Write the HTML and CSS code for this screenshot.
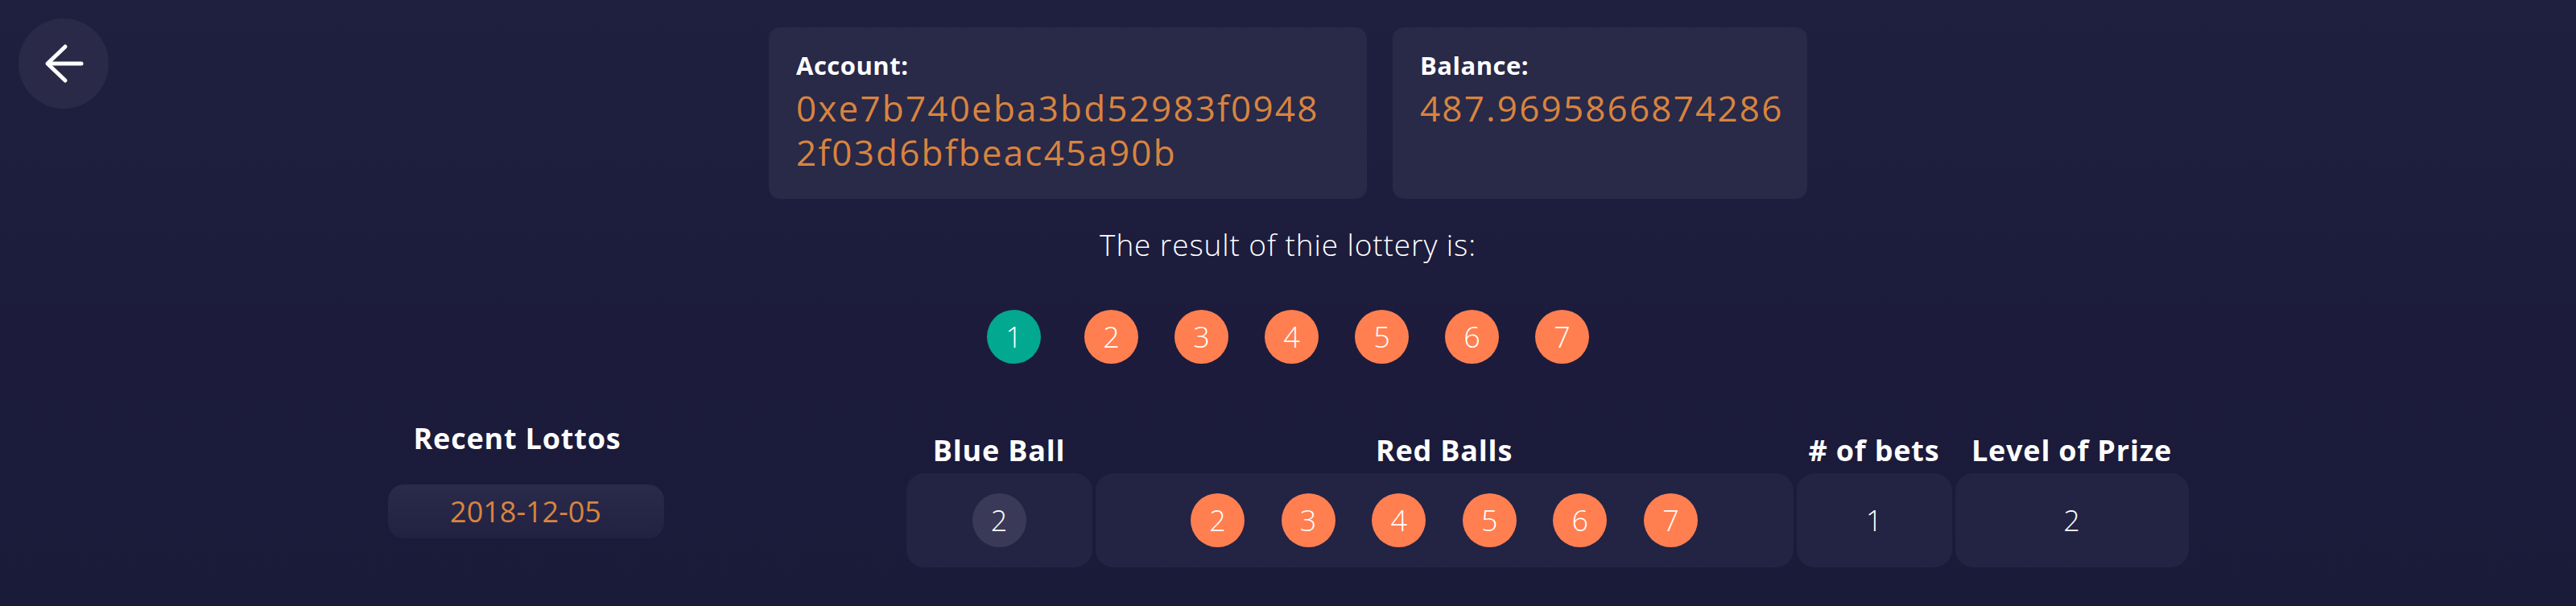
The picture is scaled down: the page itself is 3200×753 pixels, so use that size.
FILE: index.html
```html
<!DOCTYPE html>
<html lang="en">
<head>
<meta charset="utf-8">
<title>Lottery</title>
<link rel="stylesheet" href="styles.css">
</head>
<body>
<a class="back-btn" href="#" aria-label="Back">
  <svg width="112" height="112" viewBox="0 0 112 112" fill="none" stroke="#ffffff" stroke-width="5" stroke-linecap="round" stroke-linejoin="round">
    <path d="M37 56 H78"/>
    <path d="M58 35 L36 56 L58 77"/>
  </svg>
</a>

<header class="info">
  <div class="info-card account">
    <div class="info-label">Account:</div>
    <div class="info-value">0xe7b740eba3bd52983f0948<br>2f03d6bfbeac45a90b</div>
  </div>
  <div class="info-card balance">
    <div class="info-label">Balance:</div>
    <div class="info-value">487.9695866874286</div>
  </div>
</header>

<section class="result">
  <p class="result-title">The result of thie lottery is:</p>
  <div class="result-balls">
    <span class="ball ball-green ball-first">1</span>
    <span class="ball ball-red">2</span>
    <span class="ball ball-red">3</span>
    <span class="ball ball-red">4</span>
    <span class="ball ball-red">5</span>
    <span class="ball ball-red">6</span>
    <span class="ball ball-red">7</span>
  </div>
</section>

<section class="history">
  <div class="recent">
    <h2 class="recent-title">Recent Lottos</h2>
    <div class="date-pill">2018-12-05</div>
  </div>
  <div class="bets">
    <div class="col-head">Blue Ball</div>
    <div class="col-head">Red Balls</div>
    <div class="col-head"># of bets</div>
    <div class="col-head">Level of Prize</div>
    <div class="cell"><span class="ball ball-blue">2</span></div>
    <div class="cell cell-red">
      <span class="ball ball-red">2</span>
      <span class="ball ball-red">3</span>
      <span class="ball ball-red">4</span>
      <span class="ball ball-red">5</span>
      <span class="ball ball-red">6</span>
      <span class="ball ball-red">7</span>
    </div>
    <div class="cell cell-text">1</div>
    <div class="cell cell-text">2</div>
  </div>
</section>
</body>
</html>
```
FILE: styles.css
```css
* { box-sizing: border-box; }

html, body { height: 100%; }

body {
  margin: 0;
  padding-top: 34px;
  min-height: 753px;
  background: linear-gradient(180deg, #1f1f3f 0%, #1c1b3b 60%, #1a1a39 100%);
  font-family: "Open Sans", "Noto Sans", sans-serif;
  color: #ffffff;
}

.back-btn {
  position: absolute;
  left: 23px;
  top: 23px;
  width: 112px;
  height: 112px;
  border-radius: 50%;
  background: #2a2a48;
  display: block;
}
.back-btn svg { display: block; }

/* top info cards */
.info {
  width: 1290px;
  margin: 0 auto;
  display: flex;
  gap: 32px;
}

.info-card {
  background: #292948;
  border-radius: 14px;
  padding: 29px 30px 30px 34px;
}
.account { width: 743px; }
.balance { width: 515px; }

.info-label {
  font-size: 31px;
  line-height: 36px;
  font-weight: 700;
  letter-spacing: 0.5px;
  color: #ffffff;
}

.info-value {
  margin-top: 8px;
  font-size: 44px;
  line-height: 55px;
  font-weight: 400;
  letter-spacing: 2.2px;
  color: #d8843f;
  white-space: nowrap;
}

/* result */
.result {
  text-align: center;
  margin-top: 35px;
}

.result-title {
  margin: 0;
  font-size: 37px;
  line-height: 44px;
  font-weight: 350;
  letter-spacing: 0.9px;
}

.result-balls {
  margin-top: 59px;
  display: flex;
  justify-content: center;
  gap: 45px;
}

.ball {
  width: 67px;
  height: 67px;
  border-radius: 50%;
  display: inline-flex;
  align-items: center;
  justify-content: center;
  font-size: 36px;
  font-weight: 300;
  color: #ffffff;
  flex: none;
}
.ball-red { background: #ff7f50; }
.ball-green { background: #02a88f; }
.ball-blue { background: #3a3a58; }
.ball-first { margin-right: 9px; }

/* history */
.history {
  width: 2237px;
  margin: 73px auto 0;
  display: flex;
  gap: 301px;
}

.recent {
  width: 343px;
  display: flex;
  flex-direction: column;
  align-items: stretch;
}

.recent-title {
  margin: 0;
  padding-right: 21px;
  text-align: center;
  font-size: 36px;
  line-height: 40px;
  font-weight: 700;
  letter-spacing: 0.8px;
}

.date-pill {
  margin-top: 37px;
  height: 67px;
  border-radius: 20px;
  background: linear-gradient(180deg, #2a2a4a 0%, #222142 100%);
  display: flex;
  align-items: center;
  justify-content: center;
  font-size: 36px;
  font-weight: 400;
  color: #d8843f;
}

.bets {
  padding-top: 15px;
  display: grid;
  grid-template-columns: 231px 867px 193px 290px;
  column-gap: 4px;
  row-gap: 8px;
}

.col-head {
  text-align: center;
  font-size: 36px;
  line-height: 40px;
  font-weight: 700;
  letter-spacing: 0.8px;
  white-space: nowrap;
}

.cell {
  height: 117px;
  border-radius: 22px;
  background: #232344;
  display: flex;
  align-items: center;
  justify-content: center;
}

.cell-red { gap: 45.6px; }

.cell-text {
  font-size: 36px;
  font-weight: 300;
}
```
